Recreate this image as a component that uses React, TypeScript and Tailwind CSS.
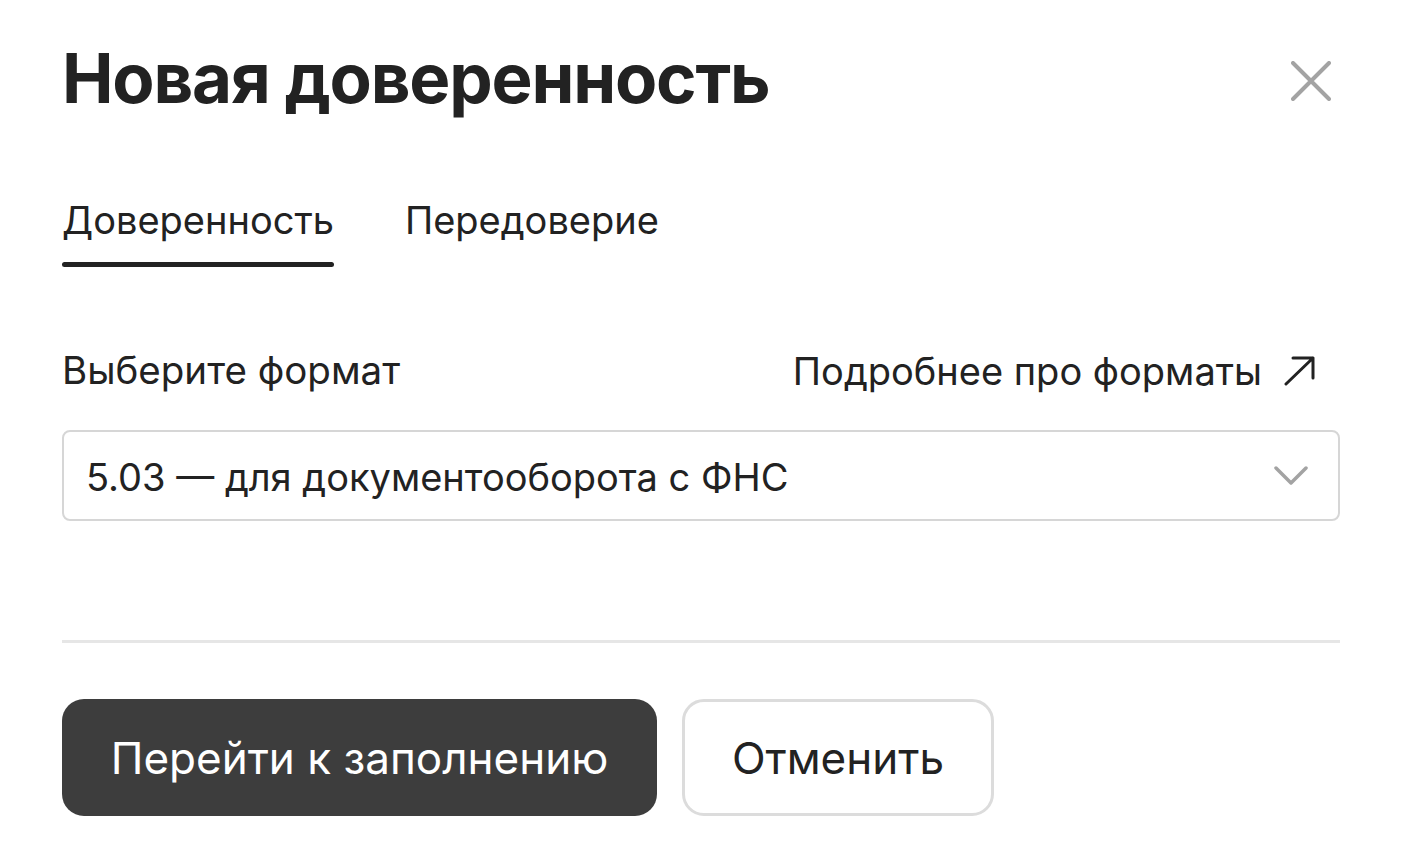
const CloseIcon = () => (
  <svg width="40" height="40" viewBox="0 0 40 40" fill="none">
    <path d="M2 2L38 38M38 2L2 38" stroke="#a3a3a3" strokeWidth="4" strokeLinecap="round" />
  </svg>
);

const ArrowIcon = () => (
  <svg width="32" height="30" viewBox="0 0 32 30" fill="none">
    <path d="M2 28L29 2M9 2H29V22" stroke="#222" strokeWidth="3" strokeLinecap="round" strokeLinejoin="round" />
  </svg>
);

const ChevronIcon = () => (
  <svg width="34" height="20" viewBox="0 0 34 20" fill="none">
    <path d="M2 2L17 17L32 2" stroke="#a3a3a3" strokeWidth="3.5" strokeLinecap="round" strokeLinejoin="round" />
  </svg>
);

export default function App() {
  return (
    <div className="w-[1418px] h-[849px] bg-white text-[#222] font-['Inter',sans-serif] overflow-hidden">
      <div className="w-[1278px] ml-[62px] flex flex-col">
        <div className="flex items-center justify-between h-[80px] mt-[38px]">
          <h1 className="text-[69px] font-bold tracking-[-1.2px] leading-none">Новая доверенность</h1>
          <button className="mr-[9px] mt-[6px]">
            <CloseIcon />
          </button>
        </div>

        <div className="flex gap-[71px] mt-[78px]">
          <div className="flex flex-col">
            <span className="text-[38px] leading-[48px]">Доверенность</span>
            <div className="h-[5px] rounded-full bg-[#222] mt-[18px]" />
          </div>
          <span className="text-[38px] leading-[48px]">Передоверие</span>
        </div>

        <div className="flex items-center justify-between mt-[80px] h-[48px]">
          <span className="text-[38.5px]">Выберите формат</span>
          <a className="flex items-center gap-[22px] text-[38px] mr-[24px]">
            Подробнее про форматы
            <ArrowIcon />
          </a>
        </div>

        <div className="mt-[35px] h-[91px] border-2 border-[#d6d6d6] rounded-[8px] flex items-center justify-between pl-[22px] pr-[30px]">
          <span className="text-[38px] mt-[4px]">5.03 — для документооборота с ФНС</span>
          <ChevronIcon />
        </div>

        <div className="mt-[119px] h-[3px] bg-[#e6e6e6]" />

        <div className="flex gap-[25px] mt-[56px]">
          <button className="h-[117px] w-[595px] rounded-[22px] bg-[#3d3d3d] text-white text-[44px]">
            Перейти к заполнению
          </button>
          <button className="h-[117px] w-[312px] rounded-[22px] border-[3px] border-[#dcdcdc] bg-white text-[44px]">
            Отменить
          </button>
        </div>
      </div>
    </div>
  );
}
